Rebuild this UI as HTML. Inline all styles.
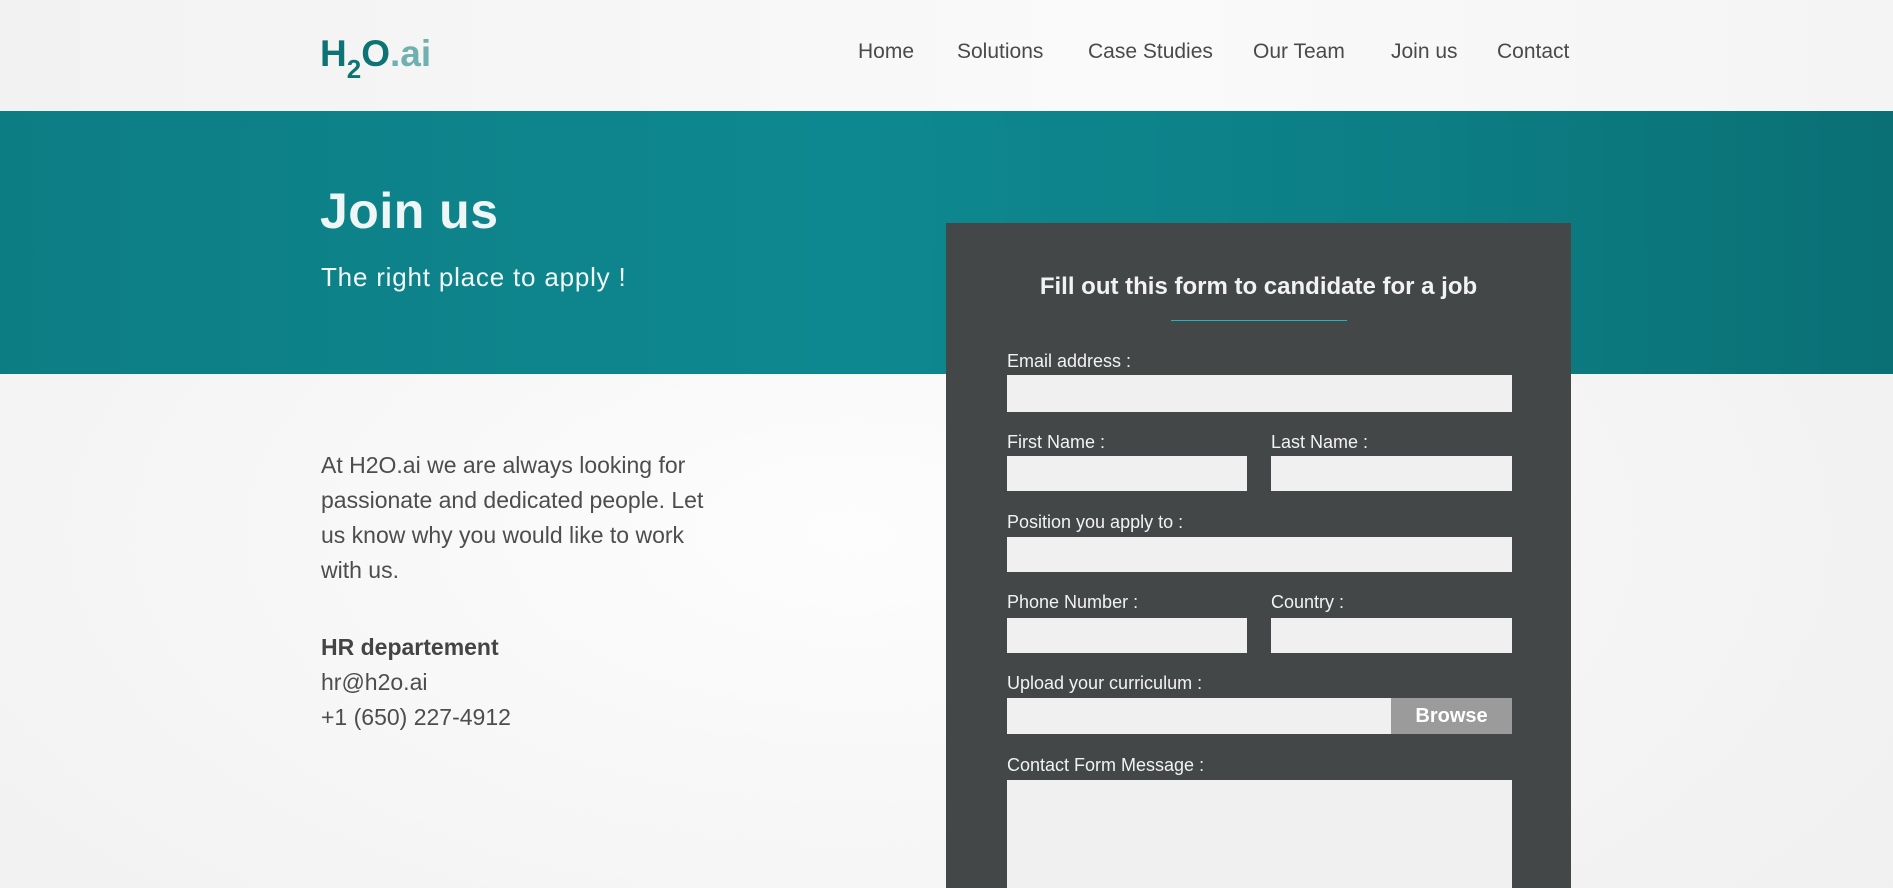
<!DOCTYPE html>
<html style="width:1893px;height:888px;overflow:hidden"><head><meta charset="utf-8"><style>
*{margin:0;padding:0;box-sizing:border-box}
body{width:1893px;height:888px;overflow:hidden;font-family:"Liberation Sans",sans-serif;background:radial-gradient(ellipse at 45% 60%,#fdfdfd 0%,#f2f2f2 70%,#efefef 100%);position:relative}
.abs{position:absolute}
.nav a{position:absolute;top:40px;font-size:21px;color:#4a4a4a;text-decoration:none;white-space:nowrap}
.band{left:0;top:111px;width:1893px;height:263px;background:linear-gradient(90deg,#0d7d84 0%,#0e8890 45%,#0c7e84 75%,#0a7075 100%)}
.form{left:946px;top:223px;width:625px;height:665px;background:#444748;overflow:hidden}
.lbl{position:absolute;color:#f2f2f2;font-size:18px;white-space:nowrap}
.in{position:absolute;background:#f0f0f0}
.p{font-size:23px;color:#4d4d4d;line-height:35px}
</style></head><body>
<div class="abs" style="left:0;top:0;width:1893px;height:111px;background:linear-gradient(90deg,#f2f2f2,#fafafa 60%,#f4f4f4)"></div>
<div class="abs" style="left:320px;top:33px;font-size:37px;font-weight:bold;color:#0d7373;white-space:nowrap">H<span style="font-size:26px;position:relative;top:12px">2</span>O<span style="color:#6fb1b0">.ai</span></div>
<div class="nav">
<a style="left:858px">Home</a><a style="left:957px">Solutions</a><a style="left:1088px">Case Studies</a><a style="left:1253px">Our Team</a><a style="left:1391px">Join us</a><a style="left:1497px">Contact</a>
</div>
<div class="abs band"></div>
<div class="abs" style="left:320px;top:182px;font-size:50px;font-weight:bold;color:#eef6f6;letter-spacing:0.5px">Join us</div>
<div class="abs" style="left:321px;top:262px;font-size:26px;letter-spacing:0.8px;color:#f0f8f8">The right place to apply !</div>
<div class="abs p" style="left:321px;top:448px;width:405px">At H2O.ai we are always looking for passionate and dedicated people. Let us know why you would like to work with us.</div>
<div class="abs p" style="left:321px;top:630px"><b style="color:#444">HR departement</b><br>hr@h2o.ai<br>+1 (650) 227-4912</div>
<div class="abs form">
<div class="abs" style="left:0;width:625px;top:50px;text-align:center;font-size:24px;font-weight:bold;color:#f2f2f2">Fill out this form to candidate for a job</div>
<div class="abs" style="left:225px;top:97px;width:176px;height:1px;background:#1fb5bd"></div>
<div class="lbl" style="left:61px;top:128px">Email address :</div>
<div class="in" style="left:61px;top:152px;width:505px;height:37px"></div>
<div class="lbl" style="left:61px;top:209px">First Name :</div>
<div class="lbl" style="left:325px;top:209px">Last Name :</div>
<div class="in" style="left:61px;top:233px;width:240px;height:35px"></div>
<div class="in" style="left:325px;top:233px;width:241px;height:35px"></div>
<div class="lbl" style="left:61px;top:289px">Position you apply to :</div>
<div class="in" style="left:61px;top:314px;width:505px;height:35px"></div>
<div class="lbl" style="left:61px;top:369px">Phone Number :</div>
<div class="lbl" style="left:325px;top:369px">Country :</div>
<div class="in" style="left:61px;top:395px;width:240px;height:35px"></div>
<div class="in" style="left:325px;top:395px;width:241px;height:35px"></div>
<div class="lbl" style="left:61px;top:450px">Upload your curriculum :</div>
<div class="in" style="left:61px;top:475px;width:505px;height:36px"></div>
<div class="abs" style="left:445px;top:475px;width:121px;height:36px;background:#9b9b9b;color:#fff;font-weight:bold;font-size:20px;text-align:center;line-height:36px">Browse</div>
<div class="lbl" style="left:61px;top:532px">Contact Form Message :</div>
<div class="in" style="left:61px;top:557px;width:505px;height:108px"></div>
</div>
</body></html>
